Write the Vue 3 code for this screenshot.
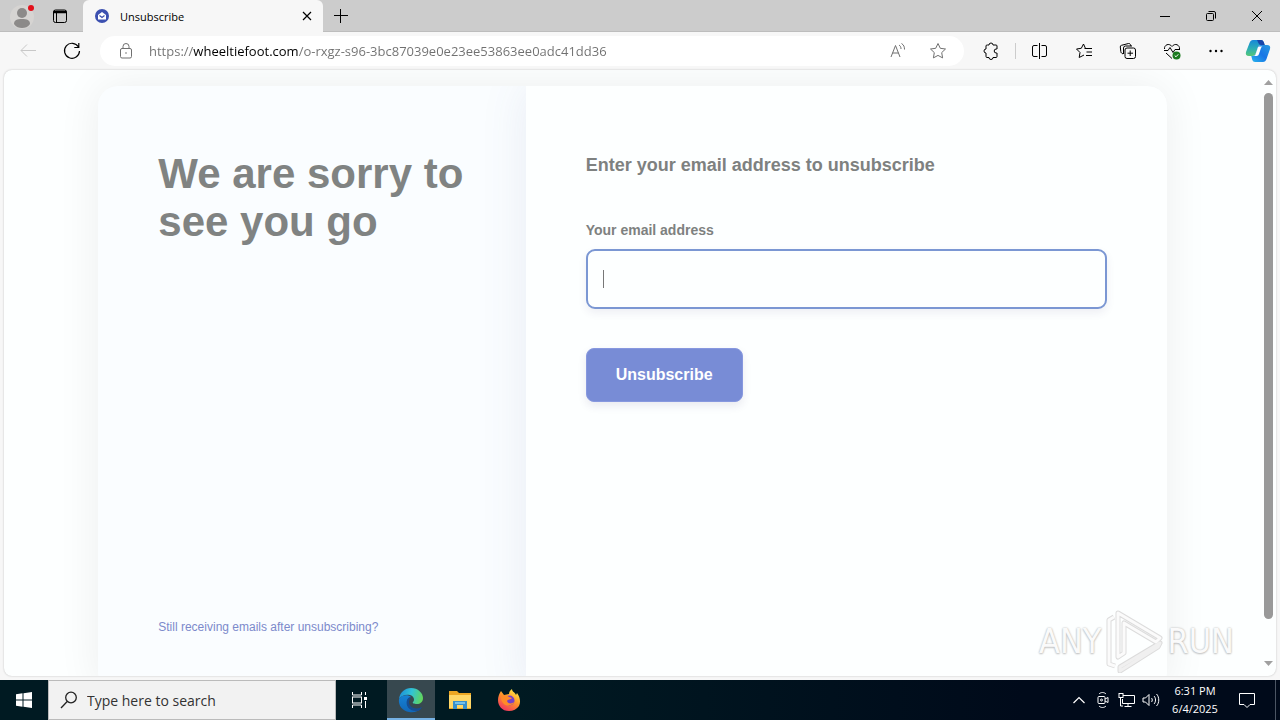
<template>
  <div class="desktop">
    <header class="tab-strip">
      <button class="profile" aria-label="Profile">
        <svg width="28" height="28" viewBox="0 0 28 28">
          <circle cx="14" cy="15" r="12" fill="#d6d4d2" />
          <circle cx="14" cy="11" r="5" fill="#8c8a89" />
          <path d="M6 22c0-4 3-5 8-5s8 1 8 5c-2 3-5 4-8 4s-6-1-8-4z" fill="#8c8a89" />
          <circle cx="23" cy="6" r="3" fill="#e3101b" />
        </svg>
      </button>
      <button class="workspaces" aria-label="Tab actions">
        <svg class="line" width="16" height="16" viewBox="0 0 16 16">
          <rect x="1.500" y="2" width="13" height="12.500" rx="2" />
          <path d="M1.500 4h13" stroke-width="2.500" /><path d="M4.500 4v10" />
        </svg>
      </button>
      <div class="tab">
        <svg width="14" height="14" viewBox="0 0 14 14">
          <circle cx="7" cy="7" r="7" fill="#3c50b0" />
          <path d="M3 6l4-3 4 3v4.500H3z" fill="#fff" />
          <path d="M4.500 6.500L7 8.500l2.500-2" fill="none" stroke="#3c50b0" stroke-width="1.200" />
        </svg>
        <span class="tab-title">Unsubscribe</span>
        <button class="tab-close" aria-label="Close tab">
          <svg class="line" width="10" height="10" viewBox="0 0 10 10"><path d="M1 1l8 8M9 1L1 9" stroke-width="1.200" /></svg>
        </button>
      </div>
      <button class="new-tab" aria-label="New tab">
        <svg class="line" width="14" height="14" viewBox="0 0 14 14"><path d="M6.500 0v14M0 6.500h14" /></svg>
      </button>
      <div class="window-controls">
        <button aria-label="Minimize">
          <svg class="line" width="10" height="10" viewBox="0 0 10 10"><path d="M0 5.500h10" /></svg>
        </button>
        <button aria-label="Restore">
          <svg class="line" width="12" height="12" viewBox="0 0 12 12">
            <rect x="1.500" y="3.500" width="7" height="7" rx="1" />
            <path d="M3.500 1.500H9a1.500 1.500 0 0 1 1.500 1.500v5.500" />
          </svg>
        </button>
        <button aria-label="Close">
          <svg class="line" width="12" height="12" viewBox="0 0 12 12"><path d="M1 1l10 10M11 1L1 11" /></svg>
        </button>
      </div>
    </header>

    <nav class="toolbar">
      <button class="disabled" aria-label="Back" disabled>
        <svg class="line" width="18" height="18" viewBox="0 0 18 18"><path d="M17 8.500H2M8 2.500l-6 6 6 6" /></svg>
      </button>
      <button aria-label="Refresh">
        <svg class="line" width="18" height="18" viewBox="0 0 18 18">
          <path d="M15.500 5A7.500 7.500 0 1 0 16.500 9M15.800 1v4.500h-4.500" stroke-width="1.200" />
        </svg>
      </button>
      <div class="address">
        <button aria-label="View site information">
          <svg class="line" width="16" height="18" viewBox="0 0 16 18">
            <rect x="2.500" y="6.500" width="11" height="9.500" rx="1.500" />
            <path d="M5 6.500V4.500a3 3 0 0 1 6 0v2" />
            <circle cx="8" cy="11" r=".8" fill="currentColor" stroke="none" />
          </svg>
        </button>
        <input v-model="url" type="text" aria-label="Address and search bar" spellcheck="false" />
        <button class="address-action" aria-label="Read aloud">
          <svg class="line" width="18" height="18" viewBox="0 0 18 18">
            <path d="M2 15L6.500 3.500 11 15M3.500 11h6M10 3c1.500 1 2 2.200 2 4M12.500 1.500C15 3 15.500 5 15.500 7.500" />
          </svg>
        </button>
        <button class="address-action" aria-label="Add to favorites">
          <svg class="line" width="18" height="18" viewBox="0 0 18 18">
            <path d="M9 1.500l2.300 4.800 5.200.7-3.800 3.600.9 5.300L9 13.400l-4.600 2.500.9-5.300L1.500 7l5.200-.7z" stroke-linejoin="round" />
          </svg>
        </button>
      </div>
      <button class="extensions" aria-label="Extensions">
        <svg class="line" width="18" height="18" viewBox="0 0 18 18">
          <path d="M5.500 3H7a2 2 0 0 1 4 0h3a1 1 0 0 1 1 1v3h-.8a2 2 0 0 0 0 4h.8v3.500a1 1 0 0 1-1 1h-3a2 2 0 0 1-4 0H5a1 1 0 0 1-1-1V11a2 2 0 0 1 0-4V4a1 1 0 0 1 1-1z" stroke-linejoin="round" />
        </svg>
      </button>
      <span class="separator"></span>
      <button aria-label="Split screen">
        <svg class="line" width="18" height="18" viewBox="0 0 18 18">
          <path d="M6.500 3.500H3A1.500 1.500 0 0 0 1.500 5v8A1.500 1.500 0 0 0 3 14.500h3.500M10.500 3.500H14A1.500 1.500 0 0 1 15.500 5v8a1.500 1.500 0 0 1-1.500 1.500h-3.500M8.500 1v16" />
        </svg>
      </button>
      <button aria-label="Favorites">
        <svg class="line" width="18" height="18" viewBox="0 0 18 18">
          <path d="M9.500 6.500H17M11.500 10H17M11 13.500h6M10.500 6.500L8.500 2 6.300 6.300 1.500 7 5 10.500 4.200 15.500 9 13" stroke-linejoin="round" />
        </svg>
      </button>
      <button aria-label="Collections">
        <svg class="line" width="18" height="18" viewBox="0 0 18 18">
          <rect x="6" y="6" width="10.500" height="10.500" rx="2" />
          <path d="M11.200 8.500v5.500M8.500 11.200H14M4 12L2.500 11A2 2 0 0 1 1.800 9.500L1.300 5A1.500 1.500 0 0 1 2.500 3.300l7-1.800a1.500 1.500 0 0 1 1.700.8l.8 1.700" />
          <path d="M4.500 12V6A2 2 0 0 1 6.500 4H13" />
        </svg>
      </button>
      <button aria-label="Browser essentials">
        <svg class="line" width="18" height="18" viewBox="0 0 18 18">
          <path d="M1.500 7C1 3 6 .5 9 4.500 12 .5 17 3 16.500 7M1 8.500h4L7 5.500l3 5 2-3h5M3 11l6 5.500" />
          <circle cx="13.500" cy="13.500" r="4" fill="#1b7a1e" stroke="none" />
          <path d="M11.700 13.500l1.300 1.300 2.300-2.500" stroke="#fff" />
        </svg>
      </button>
      <button aria-label="Settings and more">
        <svg width="16" height="16" viewBox="0 0 16 16">
          <circle cx="2.500" cy="8" r="1.200" /><circle cx="8" cy="8" r="1.200" /><circle cx="13.500" cy="8" r="1.200" />
        </svg>
      </button>
      <button class="copilot" aria-label="Copilot">
        <svg width="26" height="26" viewBox="0 0 26 26">
          <defs>
            <linearGradient id="copilot-left" x1="0" y1="0" x2="0" y2="1">
              <stop offset="0" stop-color="#1687d9" /><stop offset=".55" stop-color="#2dafb4" /><stop offset="1" stop-color="#55c777" />
            </linearGradient>
            <linearGradient id="copilot-right" x1="0" y1="1" x2="1" y2="0">
              <stop offset="0" stop-color="#28b5ed" /><stop offset=".5" stop-color="#1875e6" /><stop offset="1" stop-color="#269be0" />
            </linearGradient>
          </defs>
          <path d="M8 2h8q2 0 2.700 2l1 3h-4q-2 0-2.700 2l-2 6q-1 3-4 3H4q-4 0-3-4L4.500 5Q5.500 2 8 2z" fill="url(#copilot-left)" />
          <path d="M12 2h4q2 0 2.700 2l1 3H16q-2 0-2.600-2z" fill="#1745a9" />
          <path d="M18 24h-8q-2 0-2.700-2l-1-4H8q2 0 3-3l2-6q.7-2 2.700-2H22q4 0 3 4l-3.500 10Q20.500 24 18 24z" fill="url(#copilot-right)" />
          <path d="M14 8.500h3.500q-1 0-1.500 1.500l-2 6q-.5 2-2.500 2H9q1.500-.5 2-3l1.700-5q.3-1.500 1.300-1.500z" fill="#fff" />
        </svg>
      </button>
    </nav>

    <div class="viewport">
      <main class="page">
        <section class="card">
          <div class="intro">
            <h1>We are sorry to see you go</h1>
            <a href="#">Still receiving emails after unsubscribing?</a>
          </div>
          <form class="form" @submit.prevent>
            <h2>Enter your email address to unsubscribe</h2>
            <label for="email">Your email address</label>
            <input id="email" v-model="email" type="email" />
            <button type="submit">Unsubscribe</button>
          </form>
        </section>
      </main>
      <div class="scrollbar">
        <svg width="9" height="5" viewBox="0 0 9 5"><path d="M4.500 0L9 5H0z" /></svg>
        <span class="track"><span class="thumb"></span></span>
        <svg width="9" height="5" viewBox="0 0 9 5"><path d="M4.500 5L0 0h9z" /></svg>
      </div>
    </div>

    <footer class="taskbar">
      <button aria-label="Start">
        <svg width="16" height="16" viewBox="0 0 16 16" fill="#fff">
          <path d="M0 2.200L6.500 1.300v6.200H0zM7.500 1.200L16 0v7.500H7.500zM0 8.500h6.500v6.200L0 13.800zM7.500 8.500H16V16l-8.500-1.200z" />
        </svg>
      </button>
      <div class="search">
        <svg width="18" height="18" viewBox="0 0 18 18" fill="none" stroke="#222" stroke-width="1.300">
          <circle cx="11" cy="6.500" r="5.300" /><path d="M7.200 10.500L1 17" />
        </svg>
        <input v-model="query" type="text" placeholder="Type here to search" aria-label="Search" />
      </div>
      <button aria-label="Task view">
        <svg class="line" width="18" height="18" viewBox="0 0 18 18">
          <path d="M1.500 1v3h9V1M1.500 17v-3h9v3M14.500 1v3M14.500 10v7" />
          <rect x="1.500" y="6" width="9" height="6" /><path d="M13 6h3v3h-3z" fill="#fff" stroke="none" />
        </svg>
      </button>
      <button class="app active" aria-label="Microsoft Edge">
        <svg width="26" height="26" viewBox="0 0 26 26">
          <defs>
            <linearGradient id="edge-top" x1="0" y1=".3" x2="1" y2=".5">
              <stop offset="0" stop-color="#1c8ed8" /><stop offset=".5" stop-color="#31c3d6" /><stop offset="1" stop-color="#62d65b" />
            </linearGradient>
            <linearGradient id="edge-low" x1="0" y1="0" x2="0" y2="1">
              <stop offset="0" stop-color="#1682d4" /><stop offset="1" stop-color="#1167b8" />
            </linearGradient>
          </defs>
          <path d="M1 12C2 5 7 1 13 1c7 0 12 5 12 10 0 4-3 6-6 6s-5-1-4-2c2-2 1-6-3-7-5-1-9 1-11 4z" fill="url(#edge-top)" />
          <path d="M1 12c2-4 9-5 12-2-4 1-5 5-3 9s8 6 13 2c-3 4-8 5-12 4C5 24 0 19 1 12z" fill="url(#edge-low)" />
          <path d="M9 13c-2 6 3 12 11 11 2-1 3-2 4-4-5 3-13 1-13-5 0-2 1-3 2-5-2 0-3 1-4 3z" fill="#174d91" />
        </svg>
      </button>
      <button class="app" aria-label="File Explorer">
        <svg width="22" height="20" viewBox="0 0 22 20">
          <path d="M0 1h8l2 2h12v16H0z" fill="#eda723" /><path d="M0 5h22v13H0z" fill="#ffd767" />
          <path d="M4 11h14v8h-4v-4H8v4H4z" fill="#3990cc" /><path d="M6 12h10v2H6z" fill="#76c1ea" />
        </svg>
      </button>
      <button class="app" aria-label="Firefox">
        <svg width="24" height="24" viewBox="0 0 24 24">
          <defs>
            <linearGradient id="fox" x1=".8" y1="0" x2=".2" y2="1">
              <stop offset="0" stop-color="#fff04a" /><stop offset=".45" stop-color="#ff9629" /><stop offset="1" stop-color="#f02d65" />
            </linearGradient>
          </defs>
          <path d="M4 3l3 4 5-1c0-3 2-4 3-5 0 3 3 3 4 6l1-2c3 4 4 9 2 13-2 3-6 5-10 5C5 23 1 18 1 12 1 9 2 6 4 3z" fill="url(#fox)" />
          <circle cx="12.500" cy="12.500" r="5" fill="#7540c9" />
          <path d="M4 8c3-2 6-1 8 1l3 1c-1 2-4 1-5 3 1 3 5 3 7 1-1 4-8 5-11 1-2-2-2-5-2-7z" fill="#ff8b28" />
        </svg>
      </button>

      <div class="tray">
        <button aria-label="Show hidden icons">
          <svg class="line" width="12" height="12" viewBox="0 0 12 12"><path d="M.5 9L6 3.500 11.500 9" stroke-width="1.200" /></svg>
        </button>
        <button aria-label="Meet now">
          <svg class="line" width="14" height="18" viewBox="0 0 14 18">
            <rect x="2" y="5.500" width="7" height="7" rx="1" /><path d="M9 8l3-1.500v5L9 10M3 3c2-2 5-2 7 0M3 15c2 2 5 2 7 0" />
            <circle cx="5.500" cy="9" r="1" />
          </svg>
        </button>
        <button aria-label="Network">
          <svg class="line" width="18" height="16" viewBox="0 0 18 16">
            <path d="M5 3.500h11.500v8H4.500V7M10 11.500V15M6.500 14.500h7M2.500 6v8H5" /><rect x="1" y="1.500" width="4" height="4" />
          </svg>
        </button>
        <button aria-label="Volume">
          <svg class="line" width="18" height="16" viewBox="0 0 18 16">
            <path d="M1 6h2.500L7 2.500v11L3.500 10H1zM9.500 6c1 1 1 3 0 4M12 4c2 2 2 6 0 8M14.500 2c3 3 3 9 0 12" />
          </svg>
        </button>
        <div class="clock"><span>6:31 PM</span><span>6/4/2025</span></div>
        <button class="notifications" aria-label="Notifications">
          <svg class="line" width="18" height="18" viewBox="0 0 18 18"><path d="M1.500 2.500h15v11H12L9 16.500l-3-3H1.500z" /></svg>
        </button>
        <span class="show-desktop"></span>
      </div>
    </footer>

    <div class="watermark">
      <span>ANY</span>
      <svg width="58" height="64" viewBox="0 0 58 64" fill="none" stroke-linejoin="round">
        <g stroke="#dcdcdc" stroke-width="5">
          <path d="M9 8L4 11v44l6 2" />
          <path d="M13 48V4l42 25-4 4-32-19v30z" />
          <path d="M55 34L15 58v4L53 38z" />
        </g>
        <g stroke="#fbfbfb" stroke-width="3">
          <path d="M9 8L4 11v44l6 2" />
          <path d="M13 48V4l42 25-4 4-32-19v30z" />
          <path d="M55 34L15 58v4L53 38z" stroke="#f0f0f0" />
        </g>
      </svg>
      <span>RUN</span>
    </div>
  </div>
</template>

<script setup>
import { ref } from 'vue'

const url = ref('https://wheeltiefoot.com/o-rxgz-s96-3bc87039e0e23ee53863ee0adc41dd36')
const email = ref('')
const query = ref('')
</script>

<style>
body {
  margin: 0;
  overflow: hidden;
}
</style>

<style scoped>
.desktop {
  position: relative;
  display: flex;
  flex-direction: column;
  height: 100vh;
  background: #f7f7f7;
  font-family: "Open Sans", "Noto Sans", sans-serif;
  color: #000;
}

button {
  display: flex;
  align-items: center;
  justify-content: center;
  flex: none;
  padding: 0;
  border: none;
  background: none;
  color: inherit;
}

svg {
  display: block;
  flex: none;
}

.line {
  fill: none;
  stroke: currentColor;
}

/* Tab strip */
.tab-strip {
  display: flex;
  flex: none;
  height: 32px;
  background: #ccc;
  box-shadow: inset 0 -1px #bdbdbd;
}

.profile {
  width: 44px;
}

.workspaces {
  width: 32px;
  margin-right: 7px;
}

.tab {
  display: flex;
  align-items: center;
  box-sizing: border-box;
  width: 240px;
  padding: 0 8px 0 12px;
  background: #f7f7f7;
  border-radius: 6px 6px 0 0;
}

.tab-title {
  flex: 1;
  margin-left: 11px;
  font-size: 11px;
}

.tab-close {
  width: 16px;
  height: 16px;
}

.new-tab {
  width: 36px;
}

.window-controls {
  display: flex;
  margin-left: auto;
}

.window-controls button {
  width: 46px;
}

/* Toolbar */
.toolbar {
  display: flex;
  align-items: center;
  flex: none;
  height: 38px;
  padding: 0 2px 0 6px;
}

.toolbar button {
  width: 44px;
  height: 32px;
}

.toolbar .disabled {
  color: #c8c8c8;
}

.address {
  display: flex;
  align-items: center;
  flex: 1;
  height: 30px;
  margin: 0 5px 0 6px;
  padding: 0 6px 0 4px;
  border-radius: 15px;
  background: #fff;
  color: #707070;
}

/* The host part of the url is darker than the rest */
.address input {
  flex: 1;
  min-width: 0;
  height: 24px;
  padding: 0 0 0 1px;
  border: none;
  outline: none;
  background: linear-gradient(90deg, #707070 45px, #000 45px, #000 150px, #707070 150px);
  background-clip: text;
  -webkit-background-clip: text;
  -webkit-text-fill-color: transparent;
  font-family: inherit;
  font-size: 13px;
}

.address .address-action {
  width: 40px;
}

.separator {
  width: 1px;
  height: 16px;
  margin: 0 2px;
  background: #ccc;
}

.toolbar .copilot {
  width: 40px;
}

/* Web page */
.viewport {
  display: flex;
  flex: 1;
  min-height: 0;
  margin: 0 4px 4px;
  border-radius: 8px;
  background: #fdffff;
  box-shadow: 0 0 2px #bbb;
  overflow: hidden;
  font-family: "Liberation Sans", Arial, sans-serif;
}

.page {
  flex: 1;
  padding-top: 16px;
}

/* The card runs on below the fold */
.card {
  display: flex;
  width: 85%;
  height: calc(100% + 16px);
  margin: 0 auto;
  border-radius: 20px;
  background: #fafdff;
  box-shadow: 0 0 44px rgba(20, 0, 20, 0.07);
  overflow: hidden;
}

.intro {
  display: flex;
  flex-direction: column;
  justify-content: space-between;
  align-items: flex-start;
  box-sizing: border-box;
  width: 40%;
  padding: 64px 60px 58px;
}

h1 {
  margin: 0;
  color: #808382;
  font-size: 42px;
  line-height: 48px;
}

.intro a {
  color: #7c8acb;
  font-size: 12px;
  line-height: 14px;
  text-decoration: none;
}

.form {
  flex: 1;
  padding: 68px 60px 0;
  background: #fdffff;
  box-shadow: 0 0 44px rgba(80, 90, 150, 0.1);
  color: #7e8180;
}

h2 {
  margin: 0 0 46px;
  font-size: 18px;
  line-height: 22px;
}

label {
  display: block;
  margin-bottom: 11px;
  font-size: 14px;
  font-weight: bold;
  line-height: 16px;
}

.form input {
  display: block;
  box-sizing: border-box;
  width: 100%;
  height: 60px;
  margin-bottom: 39px;
  padding: 0 16px;
  border: 2px solid #7b97d3;
  border-radius: 9px;
  outline: none;
  background: linear-gradient(#777, #777) 15px center / 1px 18px no-repeat #fdffff;
  box-shadow: 0 4px 8px rgba(60, 50, 110, 0.08);
  font-size: 16px;
}

.form button {
  height: 54px;
  padding: 0 29px;
  border: 1px solid #8798df;
  border-radius: 8px;
  background: #788cd6;
  box-shadow: 0 4px 8px rgba(60, 50, 110, 0.1);
  color: #fff;
  font-family: inherit;
  font-size: 16px;
  font-weight: bold;
}

.scrollbar {
  display: flex;
  flex-direction: column;
  align-items: center;
  width: 15px;
  padding: 10px 0;
  fill: #a0a0a0;
}

.track {
  flex: 1;
  width: 9px;
  padding: 8px 0;
}

.thumb {
  display: block;
  height: 94%;
  border-radius: 5px;
  background: #999;
}

/* Taskbar */
.taskbar {
  display: flex;
  flex: none;
  height: 40px;
  background: linear-gradient(90deg, #001a22 40%, #000a1a 80%);
  color: #fff;
}

.taskbar > button {
  width: 48px;
}

.search {
  display: flex;
  align-items: center;
  box-sizing: border-box;
  width: 288px;
  padding: 0 11px;
  border: 1px solid #bbb;
  background: #f2f2f2;
}

.search input {
  flex: 1;
  min-width: 0;
  margin-left: 9px;
  padding: 0;
  border: none;
  outline: none;
  background: none;
  font-family: inherit;
  font-size: 14px;
}

.search input::placeholder {
  color: #333;
}

.taskbar .app {
  margin-right: 1px;
}

.taskbar .active {
  margin-left: 3px;
  background: #37484f;
  box-shadow: inset 0 -2px #76b2e4;
}

.tray {
  display: flex;
  margin-left: auto;
}

.tray button {
  width: 24px;
}

.clock {
  display: flex;
  flex-direction: column;
  justify-content: center;
  width: 64px;
  font-size: 11px;
  line-height: 18px;
  text-align: center;
}

.tray .notifications {
  width: 40px;
  margin-right: 8px;
}

.show-desktop {
  width: 4px;
  border-left: 1px solid #4b5563;
}

/* Recorder logo that lies over the page */
.watermark {
  position: absolute;
  right: 46px;
  bottom: 47px;
  display: flex;
  align-items: center;
  gap: 4px;
  color: #fafafa;
  font-family: "Liberation Sans Narrow", "DejaVu Sans Condensed", sans-serif;
  font-size: 34px;
  line-height: 64px;
  text-shadow: 0 0 2px #b4b4b4, 0 1px 2px #c8c8c8;
  pointer-events: none;
}
</style>
